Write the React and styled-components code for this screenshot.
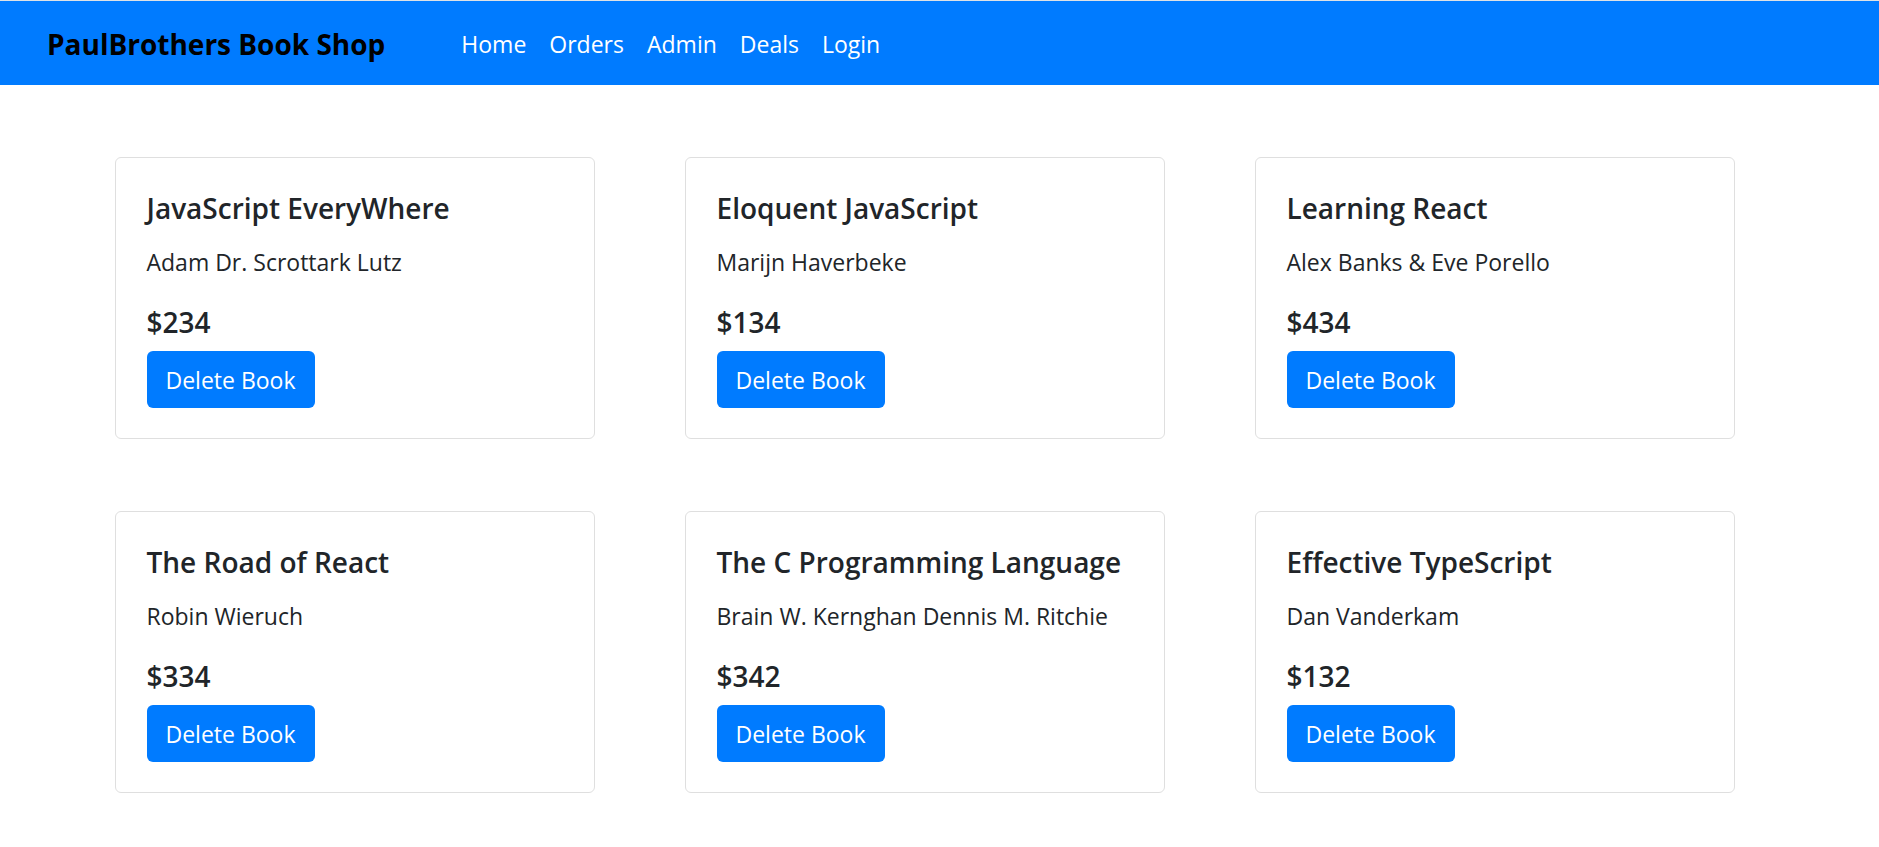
import React, { useState } from "react";
import styled, { createGlobalStyle } from "styled-components";

const GlobalStyle = createGlobalStyle`
  *, *::before, *::after { box-sizing: border-box; }
  body {
    margin: 0;
    background: #fff;
    color: #212529;
    font-family: "Segoe UI", "Open Sans", "Noto Sans", sans-serif;
    font-size: 23px;
    line-height: 36px;
  }
`;

const Header = styled.header`
  display: flex;
  align-items: center;
  flex-wrap: wrap;
  gap: 12px 76px;
  padding: 22px 47px 20px;
  border-top: 1px solid #dee2e6;
  background: #007bff;
`;

const Brand = styled.a`
  color: #000;
  font-size: 28px;
  font-weight: 700;
  line-height: 42px;
  text-decoration: none;
`;

const Nav = styled.nav`
  display: flex;
  flex-wrap: wrap;
  gap: 23px;
`;

const NavLink = styled.a`
  color: #fff;
  text-decoration: none;
`;

const BookGrid = styled.main`
  display: grid;
  grid-template-columns: repeat(auto-fit, minmax(400px, 1fr));
  gap: 72px 90px;
  max-width: 1710px;
  margin: 0 auto;
  padding: 72px 60px 48px 30px;
`;

const Card = styled.article`
  padding: 32px 31px 30px;
  border: 1px solid #dfdfdf;
  border-radius: 6px;
`;

const Title = styled.h2`
  margin: 0 0 18px;
  font-size: 28px;
  font-weight: 600;
  line-height: 36px;
`;

const Author = styled.p`
  margin: 0 0 24px;
`;

const Price = styled.h3`
  margin: 0 0 11px;
  font-size: 28px;
  font-weight: 600;
  line-height: 36px;
`;

const DeleteButton = styled.button`
  display: block;
  padding: 11px 19px 10px;
  border: 0;
  border-radius: 6px;
  background: #007bff;
  color: #fff;
  font: inherit;
  cursor: pointer;
`;

const links = ["Home", "Orders", "Admin", "Deals", "Login"];

const initialBooks = [
  { title: "JavaScript EveryWhere", author: "Adam Dr. Scrottark Lutz", price: 234 },
  { title: "Eloquent JavaScript", author: "Marijn Haverbeke", price: 134 },
  { title: "Learning React", author: "Alex Banks & Eve Porello", price: 434 },
  { title: "The Road of React", author: "Robin Wieruch", price: 334 },
  { title: "The C Programming Language", author: "Brain W. Kernghan Dennis M. Ritchie", price: 342 },
  { title: "Effective TypeScript", author: "Dan Vanderkam", price: 132 },
];

export default function App() {
  const [books, setBooks] = useState(initialBooks);
  const remove = (title) => setBooks(books.filter((book) => book.title !== title));

  return (
    <>
      <GlobalStyle />
      <Header>
        <Brand href="#home">PaulBrothers Book Shop</Brand>
        <Nav>
          {links.map((label) => (
            <NavLink key={label} href={`#${label.toLowerCase()}`}>{label}</NavLink>
          ))}
        </Nav>
      </Header>
      <BookGrid>
        {books.map(({ title, author, price }) => (
          <Card key={title}>
            <Title>{title}</Title>
            <Author>{author}</Author>
            <Price>{`$${price}`}</Price>
            <DeleteButton type="button" onClick={() => remove(title)}>Delete Book</DeleteButton>
          </Card>
        ))}
      </BookGrid>
    </>
  );
}
